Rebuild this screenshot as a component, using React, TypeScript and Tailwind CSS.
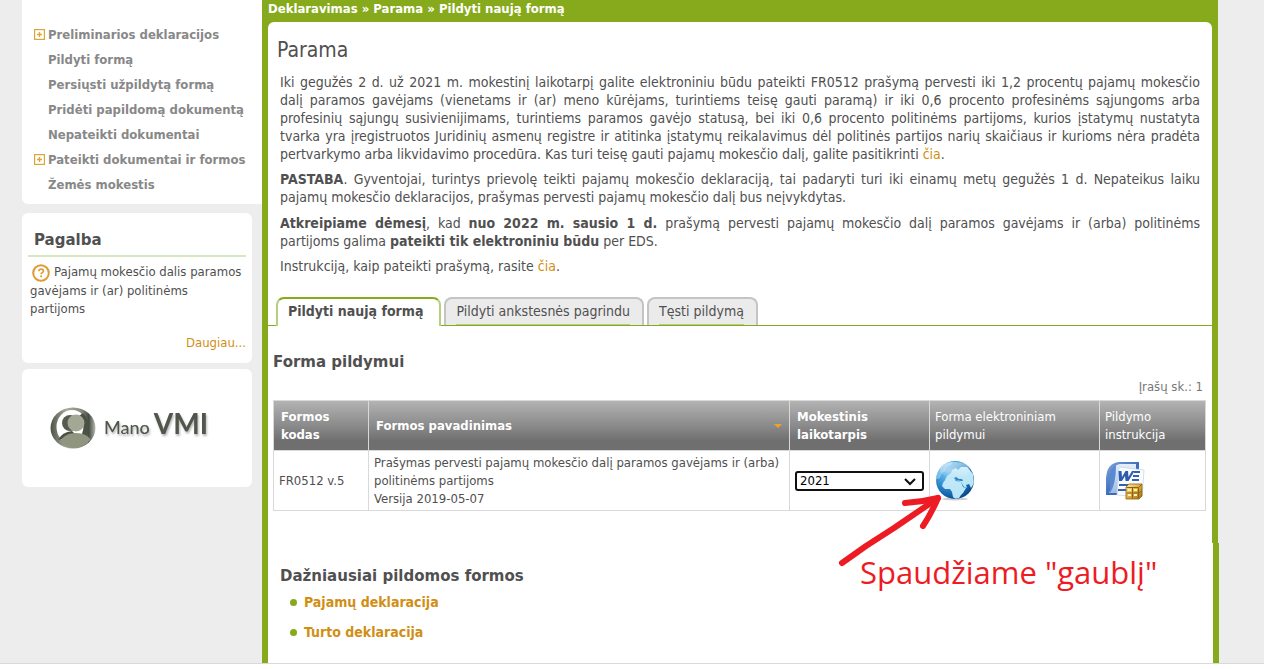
import * as React from "react";

interface MenuItem {
  label: string;
  expandable?: boolean;
}

const menuItems: MenuItem[] = [
  { label: "Preliminarios deklaracijos", expandable: true },
  { label: "Pildyti formą" },
  { label: "Persiųsti užpildytą formą" },
  { label: "Pridėti papildomą dokumentą" },
  { label: "Nepateikti dokumentai" },
  { label: "Pateikti dokumentai ir formos", expandable: true },
  { label: "Žemės mokestis" },
];

const tabs = ["Pildyti naują formą", "Pildyti ankstesnės pagrindu", "Tęsti pildymą"];

const popularForms = ["Pajamų deklaracija", "Turto deklaracija"];

function PlusIcon() {
  return (
    <svg viewBox="0 0 11 11" className="size-[11px]" fill="none" stroke="#dba63a" aria-hidden="true">
      <rect x="0.5" y="0.5" width="10" height="10" strokeWidth="1.4" />
      <path d="M3 5.5h5M5.5 3v5" strokeWidth="1.4" />
    </svg>
  );
}

function HelpIcon() {
  return (
    <svg viewBox="0 0 18 18" className="mr-1 ml-0.5 inline size-[18px] align-middle" fill="none" stroke="#e29a32" aria-hidden="true">
      <circle cx="9" cy="9" r="7.8" strokeWidth="2" />
      <path d="M6.8 7.2c0-3 4.6-2.7 4.6-.2 0 1.7-2.3 1.5-2.3 3.3" strokeWidth="1.7" />
      <path d="M9.1 11.6v1.7" strokeWidth="1.8" />
    </svg>
  );
}

function GlobeIcon() {
  return (
    <svg viewBox="0 0 40 40" className="size-10" aria-hidden="true">
      <defs>
        <radialGradient id="sea" cx="0.35" cy="0.25" r="0.8">
          <stop offset="0" stopColor="#8ccbf0" />
          <stop offset="0.4" stopColor="#3b9ada" />
          <stop offset="0.75" stopColor="#1465ab" />
          <stop offset="1" stopColor="#053a75" />
        </radialGradient>
        <linearGradient id="land" x1="0" y1="0" x2="0" y2="1">
          <stop offset="0" stopColor="#c4e8f8" />
          <stop offset="1" stopColor="#b4e6f8" />
        </linearGradient>
        <linearGradient id="shine" x1="0" y1="0" x2="0" y2="1">
          <stop offset="0" stopColor="#fff" stopOpacity="0.5" />
          <stop offset="1" stopColor="#fff" stopOpacity="0" />
        </linearGradient>
        <clipPath id="globe">
          <circle cx="20" cy="19" r="19" />
        </clipPath>
      </defs>
      <ellipse cx="20" cy="38" rx="13" ry="1.5" fill="#b8bcc0" opacity="0.7" />
      <g clipPath="url(#globe)">
        <rect width="40" height="40" fill="url(#sea)" />
        <g fill="url(#land)">
          <path d="M0 14Q3 4 13 1l5 0-2 3-4 2-1 4-4 2-2 5-5 2z" opacity="0.45" />
          <path d="M12 15l4-3 1-3 4-2 2 2 3-3 6 0 6 7 1 9-3 5-2-4-3 1 1 3-3-1-3-5-3-1-2-2-2 3-3-2-3 2-3-2z" />
          <path d="M8 22q2-4 6-4l4 0 3 2 5 1 2 5 3 1-3 5-2 2-2 3q-4 2-6-1l-1-5-2-3-5 0-3-3z" />
        </g>
        <path d="M19 17l2 2 5 1 2 0-1-2-3 0-3-2z" fill="#2e86c6" />
      </g>
      <ellipse cx="20" cy="9" rx="15" ry="8" fill="url(#shine)" />
    </svg>
  );
}

function WordIcon() {
  return (
    <svg viewBox="0 0 40 40" className="size-10" aria-hidden="true">
      <defs>
        <linearGradient id="cover" x1="0" y1="0" x2="1" y2="1">
          <stop offset="0" stopColor="#7fa5de" />
          <stop offset="0.5" stopColor="#3f70bf" />
          <stop offset="1" stopColor="#2450a4" />
        </linearGradient>
        <linearGradient id="fold" x1="0" y1="0" x2="0" y2="1">
          <stop offset="0" stopColor="#e6effb" />
          <stop offset="1" stopColor="#9dbbe6" />
        </linearGradient>
        <linearGradient id="gold" x1="0" y1="0" x2="1" y2="1">
          <stop offset="0" stopColor="#fff0a8" />
          <stop offset="0.5" stopColor="#e0ad3c" />
          <stop offset="1" stopColor="#9b6a12" />
        </linearGradient>
      </defs>
      <path d="M1 34V17Q2 2 14 1h20v33z" fill="url(#cover)" />
      <path d="M4 32q2-4 2-14Q7 4 15 3h16v6H18L12 32z" fill="url(#fold)" />
      <path d="M5 32q6-9 6-28-6 4-6 14z" fill="#5b88cf" />
      <path d="M14 6l25 3-2 27-25-2z" fill="#fafcff" stroke="#c9d5e8" strokeWidth="0.8" />
      <path d="M13.500 10h3l0.500 6 3.500-6h2.500l0.500 6 3.500-6h2.500l-6 10h-3l-0.500-5-3 5h-3z" fill="#2e5dae" />
      <path d="M29 11h6M28 15h6M27 19h7M14 24h12M13 29h8" stroke="#3461b0" strokeWidth="2.200" />
      <path d="M21 26l3-3h13v12l-3 3H21z" fill="url(#gold)" stroke="#8c6213" strokeWidth="0.8" />
      <path d="M21.500 26.500h12v11M33.500 26.500l3-3M27.500 26.500v11M21.500 32h12l3-2" fill="none" stroke="#8c6213" />
      <path d="M23 29h3M29 29h3M23 34h3M29 34h3" stroke="#fff3b8" strokeWidth="2" />
    </svg>
  );
}

function ManoVmiLogo() {
  return (
    <div className="flex items-center gap-2 text-[#50564a]">
      <svg viewBox="0 0 46 42" className="h-[42px] w-[46px]" aria-hidden="true">
        <defs>
          <linearGradient id="ring" x1="0" y1="0" x2="1" y2="0">
            <stop offset="0" stopColor="#4b5145" />
            <stop offset="0.35" stopColor="#a9ad9f" />
            <stop offset="0.7" stopColor="#83887a" />
            <stop offset="0.85" stopColor="#454b40" />
            <stop offset="1" stopColor="#b9bcb2" />
          </linearGradient>
          <clipPath id="disc">
            <circle cx="24" cy="21" r="20" />
          </clipPath>
        </defs>
        <ellipse cx="23" cy="21" rx="22.5" ry="20.5" fill="url(#ring)" />
        <ellipse cx="22" cy="20" rx="15.5" ry="17" fill="#fff" />
        <path d="M33 6q10 12 2 25l-3-4q4-10-3-18z" fill="#4a5044" />
        <g clipPath="url(#disc)">
          <path d="M8 33q4-8 14-9l4 4z" fill="#4a5044" />
          <ellipse cx="26" cy="37" rx="16" ry="11" fill="#90957f" />
        </g>
        <circle cx="20" cy="16" r="8" fill="#555b4e" />
        <circle cx="26" cy="16" r="8.5" fill="#a3a896" />
      </svg>
      <span className="flex items-baseline pb-1.5 font-['Lato',sans-serif] drop-shadow-[1px_2px_1px_rgba(0,0,0,0.3)]">
        <span className="text-lg leading-8 font-medium">Mano</span>
        <span className="ml-1 text-[28px] leading-8 font-bold">VMI</span>
      </span>
    </div>
  );
}

/** Red hand-drawn arrow with its caption, anchored to the globe button. */
function GlobeHint() {
  return (
    <div className="pointer-events-none absolute top-[31px] -left-[99px] z-10 text-[#ed1c24]">
      <svg viewBox="0 0 110 76" className="h-[76px] w-[110px]" fill="none" stroke="currentColor" strokeLinecap="round" strokeLinejoin="round" aria-hidden="true">
        <path d="M6 71L30 54 58 36 102 6" strokeWidth="6" />
        <path d="M69 11Q86 10 102 6 95 22 87 34" strokeWidth="6" />
      </svg>
      <p className="absolute top-[60px] left-[24px] font-['Open_Sans',sans-serif] text-[31px] leading-10 whitespace-nowrap">
        Spaudžiame "gaublį"
      </p>
    </div>
  );
}

/** A full line of the intro text, stretched to both margins. */
function Line({ children }: { children: React.ReactNode }) {
  return <span className="block [text-align-last:justify]">{children} </span>;
}

function Sidebar() {
  return (
    <aside className="w-[240px] shrink-0">
      <nav className="rounded-bl-md bg-white pt-[22px] pb-[7px] pl-3">
        <ul>
          {menuItems.map(({ label, expandable }) => (
            <li key={label} className="flex h-[25px] items-center">
              <span className="w-[14px] shrink-0">{expandable && <PlusIcon />}</span>
              <a href="#" className="text-[13px] font-bold whitespace-nowrap text-[#888]">
                {label}
              </a>
            </li>
          ))}
        </ul>
      </nav>

      <section className="mt-[9px] mr-[10px] rounded-md bg-white px-[6px] pt-4 pb-[11px]">
        <h2 className="border-b-2 border-[#d5e8c0] px-[6px] pb-1 font-['DejaVu_Sans',sans-serif] text-[15px] leading-[22px] font-bold">
          Pagalba
        </h2>
        <p className="px-0.5 pt-[6px] text-[13px] leading-[18px]">
          <HelpIcon />
          Pajamų mokesčio dalis paramos gavėjams ir (ar) politinėms partijoms
        </p>
        <p className="mt-4 text-right text-[13px] leading-[18px]">
          <a href="#" className="text-[#d08f14]">Daugiau...</a>
        </p>
      </section>

      <section className="mt-[6px] mr-[10px] flex h-[118px] items-center rounded-md bg-white pl-7">
        <ManoVmiLogo />
      </section>
    </aside>
  );
}

function FormsTable() {
  const [year, setYear] = React.useState("2021");

  return (
    <table className="w-full table-fixed border-collapse border border-[#d9d9d9] text-left text-[13px] leading-[18px]">
      <colgroup>
        <col className="w-[95px]" />
        <col />
        <col className="w-[140px]" />
        <col className="w-[170px]" />
        <col className="w-[106px]" />
      </colgroup>
      <thead>
        <tr className="h-[50px] bg-linear-to-b from-[#b3b3b3] via-[#8a8a8a] via-50% to-[#6f6f6f] to-80% text-white">
          <th className="border border-[#d9d9d9] px-[7px]">Formos kodas</th>
          <th className="border border-[#d9d9d9] px-[7px]">
            <span className="flex items-center justify-between">
              Formos pavadinimas
              <svg viewBox="0 0 8 4" className="h-1 w-2" aria-hidden="true">
                <path d="M0 0h8L4 4z" fill="#f2a02c" />
              </svg>
            </span>
          </th>
          <th className="border border-[#d9d9d9] px-[7px]">Mokestinis laikotarpis</th>
          <th className="border border-[#d9d9d9] px-[5px] font-normal">Forma elektroniniam pildymui</th>
          <th className="border border-[#d9d9d9] px-[5px] font-normal">Pildymo instrukcija</th>
        </tr>
      </thead>
      <tbody>
        <tr className="h-[60px]">
          <td className="border border-[#d9d9d9] px-[5px]">FR0512 v.5</td>
          <td className="border border-[#d9d9d9] px-[5px]">
            Prašymas pervesti pajamų mokesčio dalį paramos gavėjams ir (arba) politinėms partijoms
            <br />
            Versija 2019-05-07
          </td>
          <td className="border border-[#d9d9d9] px-[5px]">
            <span className="relative block">
              <select
                aria-label="Mokestinis laikotarpis"
                value={year}
                onChange={(event) => setYear(event.target.value)}
                className="block h-5 w-full appearance-none rounded-[3px] border-2 border-[#101010] bg-white px-[3px] text-[13px] leading-4 text-black"
              >
                <option>2021</option>
              </select>
              <svg viewBox="0 0 12 8" className="pointer-events-none absolute top-[7px] right-2 h-2 w-3" fill="none" stroke="#101010" strokeWidth="2" aria-hidden="true">
                <path d="M1 1l5 5 5-5" />
              </svg>
            </span>
          </td>
          <td className="border border-[#d9d9d9] px-[5px]">
            <div className="relative">
              <button type="button" aria-label="Pildyti elektroninę formą" className="block cursor-pointer">
                <GlobeIcon />
              </button>
              <GlobeHint />
            </div>
          </td>
          <td className="border border-[#d9d9d9] px-[5px]">
            <a href="#" aria-label="Pildymo instrukcija" className="block size-10">
              <WordIcon />
            </a>
          </td>
        </tr>
      </tbody>
    </table>
  );
}

export default function App() {
  const [activeTab, setActiveTab] = React.useState(0);

  return (
    <div className="overflow-hidden bg-white pb-[5px] font-['DejaVu_Sans_Condensed','Noto_Sans',sans-serif] text-[#505050]">
      <div className="flex border-b border-[#d9d9d9] bg-[#ededed] pl-[22px]">
        <Sidebar />

        <main className="min-w-0 flex-1 border-l-6 border-[#86aa1b] bg-white">
          <div className="bg-[#86aa1b]">
            <nav className="h-[22px] text-[13px] leading-[18px] font-bold text-white">
              Deklaravimas » Parama » Pildyti naują formą
            </nav>
            <div className="h-2 rounded-t-md bg-white" />
          </div>

          <div className="px-3 text-sm leading-[18px]">
            <h1 className="-ml-[3px] pt-[6px] pb-[9px] text-[21px] leading-7">Parama</h1>
            <p>
              <Line>
                Iki gegužės 2 d. už 2021 m. mokestinį laikotarpį galite elektroniniu būdu pateikti FR0512 prašymą
                pervesti iki 1,2 procentų pajamų mokesčio
              </Line>
              <Line>
                dalį paramos gavėjams (vienetams ir (ar) meno kūrėjams, turintiems teisę gauti paramą) ir iki 0,6
                procento profesinėms sąjungoms arba
              </Line>
              <Line>
                profesinių sąjungų susivienijimams, turintiems paramos gavėjo statusą, bei iki 0,6 procento politinėms
                partijoms, kurios įstatymų nustatyta
              </Line>
              <Line>
                tvarka yra įregistruotos Juridinių asmenų registre ir atitinka įstatymų reikalavimus dėl politinės
                partijos narių skaičiaus ir kurioms nėra pradėta
              </Line>
              pertvarkymo arba likvidavimo procedūra. Kas turi teisę gauti pajamų mokesčio dalį, galite pasitikrinti{" "}
              <a href="#" className="text-[#d08f14]">čia</a>.
            </p>
            <p className="mt-[7px]">
              <Line>
                <b>PASTABA</b>. Gyventojai, turintys prievolę teikti pajamų mokesčio deklaraciją, tai padaryti turi iki
                einamų metų gegužės 1 d. Nepateikus laiku
              </Line>
              pajamų mokesčio deklaracijos, prašymas pervesti pajamų mokesčio dalį bus neįvykdytas.
            </p>
            <p className="mt-2">
              <Line>
                <b>Atkreipiame dėmesį</b>, kad <b>nuo 2022 m. sausio 1 d.</b> prašymą pervesti pajamų mokesčio dalį
                paramos gavėjams ir (arba) politinėms
              </Line>
              partijoms galima <b>pateikti tik elektroniniu būdu</b> per EDS.
            </p>
            <p className="mt-[7px]">
              Instrukciją, kaip pateikti prašymą, rasite <a href="#" className="text-[#d08f14]">čia</a>.
            </p>
          </div>

          <div role="tablist" className="mt-[22px] flex items-end gap-[3px] border-b border-[#86aa1b] pl-2 text-sm">
            {tabs.map((label, index) => (
              <button
                key={label}
                type="button"
                role="tab"
                aria-selected={index === activeTab}
                onClick={() => setActiveTab(index)}
                className={
                  index === activeTab
                    ? "-mb-px h-[29px] cursor-pointer rounded-t-lg border-x-2 border-t-2 border-x-[#b5d080] border-t-[#86aa1b] bg-white pr-4 pl-[10px] font-bold"
                    : "h-7 cursor-pointer rounded-t-lg border-x-2 border-t-2 border-[#c4c4c4] bg-[#ebebeb] pr-3 pl-[10px]"
                }
              >
                <span
                  className={
                    index === activeTab ? "block h-[27px] leading-6" : "block h-[26px] border-b border-[#b5d080] leading-6"
                  }
                >
                  {label}
                </span>
              </button>
            ))}
          </div>

          <section className="pt-6 pr-[6px] pl-[5px]">
            <h2 className="font-['DejaVu_Sans',sans-serif] text-[15px] leading-6 font-bold">Forma pildymui</h2>
            <p className="pt-1 pr-[3px] pb-1 text-right text-[13px] leading-[18px] text-[#777]">Įrašų sk.: 1</p>
            <FormsTable />
          </section>

          <section className="pt-[54px] pb-4 pl-3">
            <h2 className="font-['DejaVu_Sans',sans-serif] text-[15px] leading-[22px] font-bold">
              Dažniausiai pildomos formos
            </h2>
            <ul className="pl-[10px]">
              {popularForms.map((label) => (
                <li key={label} className="flex h-[30px] items-center gap-[7px]">
                  <span className="size-[7px] rounded-full bg-[#86aa1b]" />
                  <a href="#" className="text-sm font-bold text-[#d08f14]">
                    {label}
                  </a>
                </li>
              ))}
            </ul>
          </section>
        </main>

        {/* right frame, stepping out by a pixel next to the footer block */}
        <div className="flex w-[52px] shrink-0 flex-col">
          <div className="w-[6px] flex-1 bg-[#86aa1b]" />
          <div className="h-[120px] w-[7px] border-l border-white bg-[#86aa1b]" />
        </div>
      </div>
    </div>
  );
}
